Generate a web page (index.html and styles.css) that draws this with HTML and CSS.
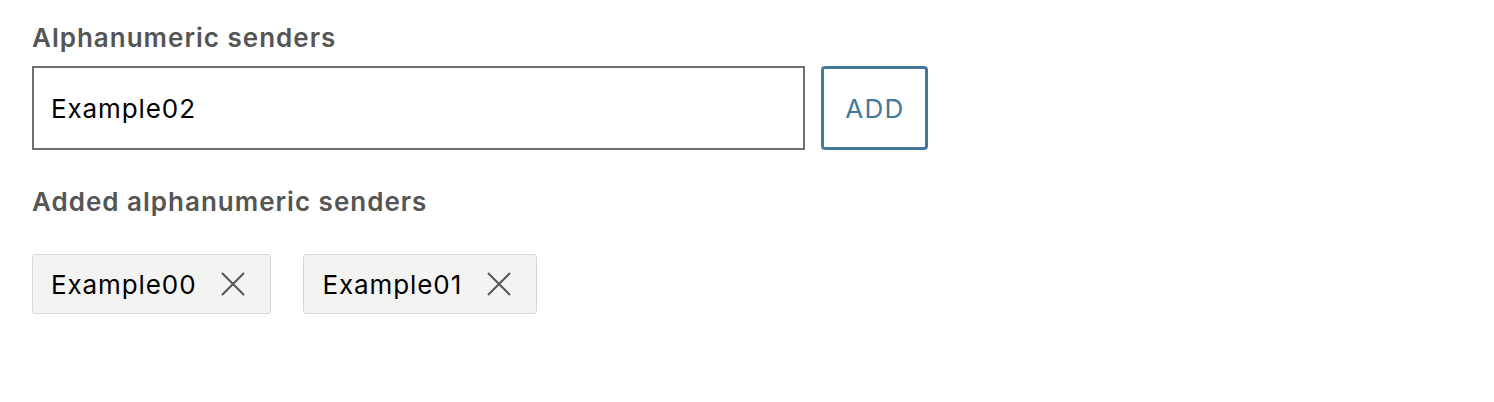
FILE: index.html
```html
<!DOCTYPE html>
<html lang="en">
<head>
    <meta charset="UTF-8">
    <title>Alphanumeric senders</title>
    <link rel="stylesheet" href="styles.css">
</head>
<body>
    <div class="senders">
        <!-- Adding a sender -->
        <label class="field-label" for="senderInput">Alphanumeric senders</label>
        <div class="add-row">
            <input type="text" id="senderInput" class="sender-input" value="Example02">
            <button class="add-btn">ADD</button>
        </div>

        <!-- Already added senders -->
        <div class="field-label added-label">Added alphanumeric senders</div>
        <div class="chips">
            <div class="chip">
                <span class="chip-text">Example00</span>
                <svg class="chip-close" viewBox="0 0 24 24" width="24" height="24"><path d="M1 1L23 23M23 1L1 23"/></svg>
            </div>
            <div class="chip">
                <span class="chip-text">Example01</span>
                <svg class="chip-close" viewBox="0 0 24 24" width="24" height="24"><path d="M1 1L23 23M23 1L1 23"/></svg>
            </div>
        </div>
    </div>
</body>
</html>
```

FILE: styles.css
```css
/* Page */
body {
    margin: 0;
    background: #fff;
    font-family: Inter, "Noto Sans", sans-serif;
    letter-spacing: 0.9px;
}

.senders {
    padding: 23px 32px;
}

/* Section labels */
.field-label {
    display: block;
    font-size: 26px;
    line-height: 29px;
    font-weight: 600;
    color: #555;
    letter-spacing: 1px;
}

.added-label {
    margin-top: 37px;
}

/* Input + button */
.add-row {
    display: flex;
    gap: 16px;
    margin-top: 14px;
}

.sender-input {
    box-sizing: border-box;
    width: 773px;
    height: 84px;
    border: 2px solid #707070;
    padding: 0 17px;
    font-family: inherit;
    font-size: 26px;
    letter-spacing: 0.9px;
    color: #000;
    outline: none;
}

.add-btn {
    box-sizing: border-box;
    width: 107px;
    height: 84px;
    border: 3px solid #44799a;
    border-radius: 4px;
    background: #fff;
    color: #44799a;
    font-family: inherit;
    font-size: 26px;
    letter-spacing: 1.3px;
    padding: 0 0 0 1px;
    cursor: pointer;
}

/* Chips */
.chips {
    display: flex;
    gap: 32px;
    margin-top: 38px;
}

.chip {
    box-sizing: border-box;
    height: 60px;
    display: flex;
    align-items: center;
    gap: 25px;
    padding: 0 25px 0 18px;
    background: #f3f3f2;
    border: 1px solid #d8d8d8;
    border-radius: 3px;
    font-size: 26px;
    color: #000;
}

.chip-close {
    stroke: #555;
    stroke-width: 2;
    fill: none;
}
```
